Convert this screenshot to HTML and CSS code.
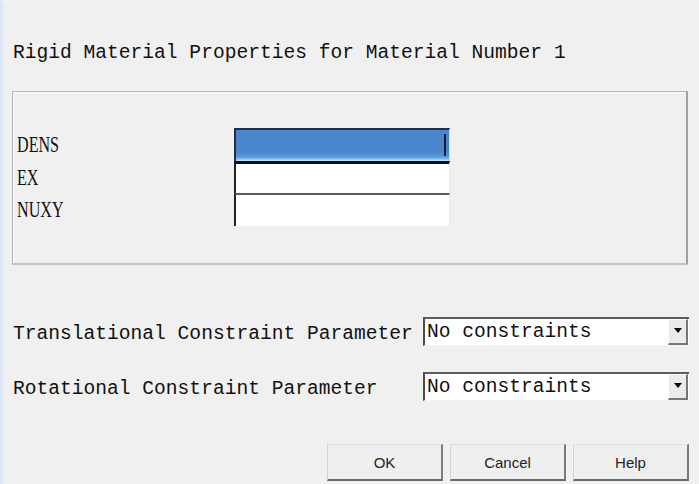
FILE: index.html
```html
<!DOCTYPE html>
<html>
<head>
<meta charset="utf-8">
<link rel="stylesheet" href="styles.css">
</head>
<body>
<div class="dialog">
  <div class="title">Rigid Material Properties for Material Number 1</div>
  <div class="group">
    <div class="field-row">
      <span class="label"><span class="label-text">DENS</span></span>
      <div class="input selected"><span class="caret"></span></div>
    </div>
    <div class="field-row">
      <span class="label"><span class="label-text">EX</span></span>
      <div class="input dark-top"></div>
    </div>
    <div class="field-row">
      <span class="label"><span class="label-text">NUXY</span></span>
      <div class="input gray-top"></div>
    </div>
  </div>
  <div class="constraint-row first">
    <span class="clabel">Translational Constraint Parameter</span>
    <div class="combo">
      <span class="combo-text">No constraints</span>
      <span class="combo-btn"><svg width="8" height="5" viewBox="0 0 8 5"><path d="M0 0H8L4 5Z" fill="#000"/></svg></span>
    </div>
  </div>
  <div class="constraint-row second">
    <span class="clabel">Rotational Constraint Parameter</span>
    <div class="combo">
      <span class="combo-text">No constraints</span>
      <span class="combo-btn"><svg width="8" height="5" viewBox="0 0 8 5"><path d="M0 0H8L4 5Z" fill="#000"/></svg></span>
    </div>
  </div>
  <div class="buttons">
    <button class="btn">OK</button>
    <button class="btn">Cancel</button>
    <button class="btn">Help</button>
  </div>
</div>
</body>
</html>
```
FILE: styles.css
```css
html, body {
  margin: 0;
  padding: 0;
  background: #f0f0f0;
  width: 699px;
  height: 484px;
  overflow: hidden;
}

.dialog {
  box-sizing: border-box;
  height: 484px;
  border-left: 3px solid #dce6f4;
  border-top: 2px solid #eef2f8;
  padding-left: 9px;
  color: #111;
}

.title {
  margin-top: 41px;
  padding-left: 1px;
  font-family: "Liberation Mono", monospace;
  font-size: 19.6px;
  line-height: 20px;
  white-space: nowrap;
}

.group {
  box-sizing: border-box;
  margin-top: 28px;
  width: 676px;
  height: 174px;
  border: 1px solid #b4b4b4;
  border-right: 2px solid #a0a0a0;
  border-bottom: 2px solid #c4c4c4;
  box-shadow: inset 1px 1px 0 #fafafa;
  padding-top: 36px;
  padding-left: 4px;
}

.field-row {
  display: flex;
  align-items: center;
  height: 32.5px;
}

.label {
  width: 217px;
  flex: none;
  font-family: "Liberation Serif", serif;
  font-size: 23px;
  line-height: 24px;
  padding-top: 2px;
}

.label-text {
  display: inline-block;
  transform: scaleX(0.7);
  transform-origin: left center;
}

.input {
  box-sizing: border-box;
  width: 216px;
  height: 32.5px;
  background: #fff;
  border-left: 2px solid #222;
  border-top: 2px solid #555;
  border-right: 1px solid #ececec;
  position: relative;
}

.input.selected {
  background: linear-gradient(#4a86cc 0%, #4a86cc 70%, #56a0de 88%, #cfe3f5 100%);
  border-top: 2px solid #1d2f55;
  border-left: 2px solid #1d2f55;
  border-right: 1px solid #cfe0f2;
}

.input.dark-top {
  border-top: 3px solid #111;
}

.input.gray-top {
  border-top: 2px solid #5a5a5a;
}

.caret {
  position: absolute;
  right: 3px;
  top: 4px;
  width: 2px;
  height: 22px;
  background: #0b1430;
}

.constraint-row {
  display: flex;
  align-items: center;
  height: 29px;
}

.constraint-row.first {
  margin-top: 52px;
}

.constraint-row.second {
  margin-top: 26px;
}

.clabel {
  width: 410px;
  flex: none;
  padding-left: 1px;
  padding-top: 4px;
  font-family: "Liberation Mono", monospace;
  font-size: 19.6px;
  line-height: 20px;
  white-space: nowrap;
}

.combo {
  box-sizing: border-box;
  display: flex;
  align-items: center;
  width: 266px;
  height: 29px;
  background: #fff;
  border-top: 2px solid #5c5c5c;
  border-left: 2px solid #4a4a4a;
  border-bottom: 1px solid #f4f4f4;
}

.combo-text {
  flex: 1;
  padding-left: 2px;
  font-family: "Liberation Mono", monospace;
  font-size: 19.6px;
  line-height: 20px;
  white-space: nowrap;
}

.combo-btn {
  box-sizing: border-box;
  width: 20px;
  height: 26px;
  display: flex;
  align-items: center;
  justify-content: center;
  background: #ebebeb;
  border-left: 1px solid #fff;
  border-top: 1px solid #fff;
  border-right: 2px solid #777;
  border-bottom: 2px solid #777;
  margin-right: 1px;
  padding-bottom: 3px;
}

.buttons {
  display: flex;
  gap: 7px;
  margin-top: 43px;
  margin-left: 315px;
}

.btn {
  box-sizing: border-box;
  width: 116px;
  height: 37px;
  background: #efefef;
  border: none;
  border-top: 1px solid #dedede;
  border-left: 1px solid #d4d4d4;
  border-right: 2px solid #7a7a7a;
  border-bottom: 2px solid #6a6a6a;
  font-family: "Liberation Sans", sans-serif;
  font-size: 15px;
  color: #222;
  padding: 0;
}
```
